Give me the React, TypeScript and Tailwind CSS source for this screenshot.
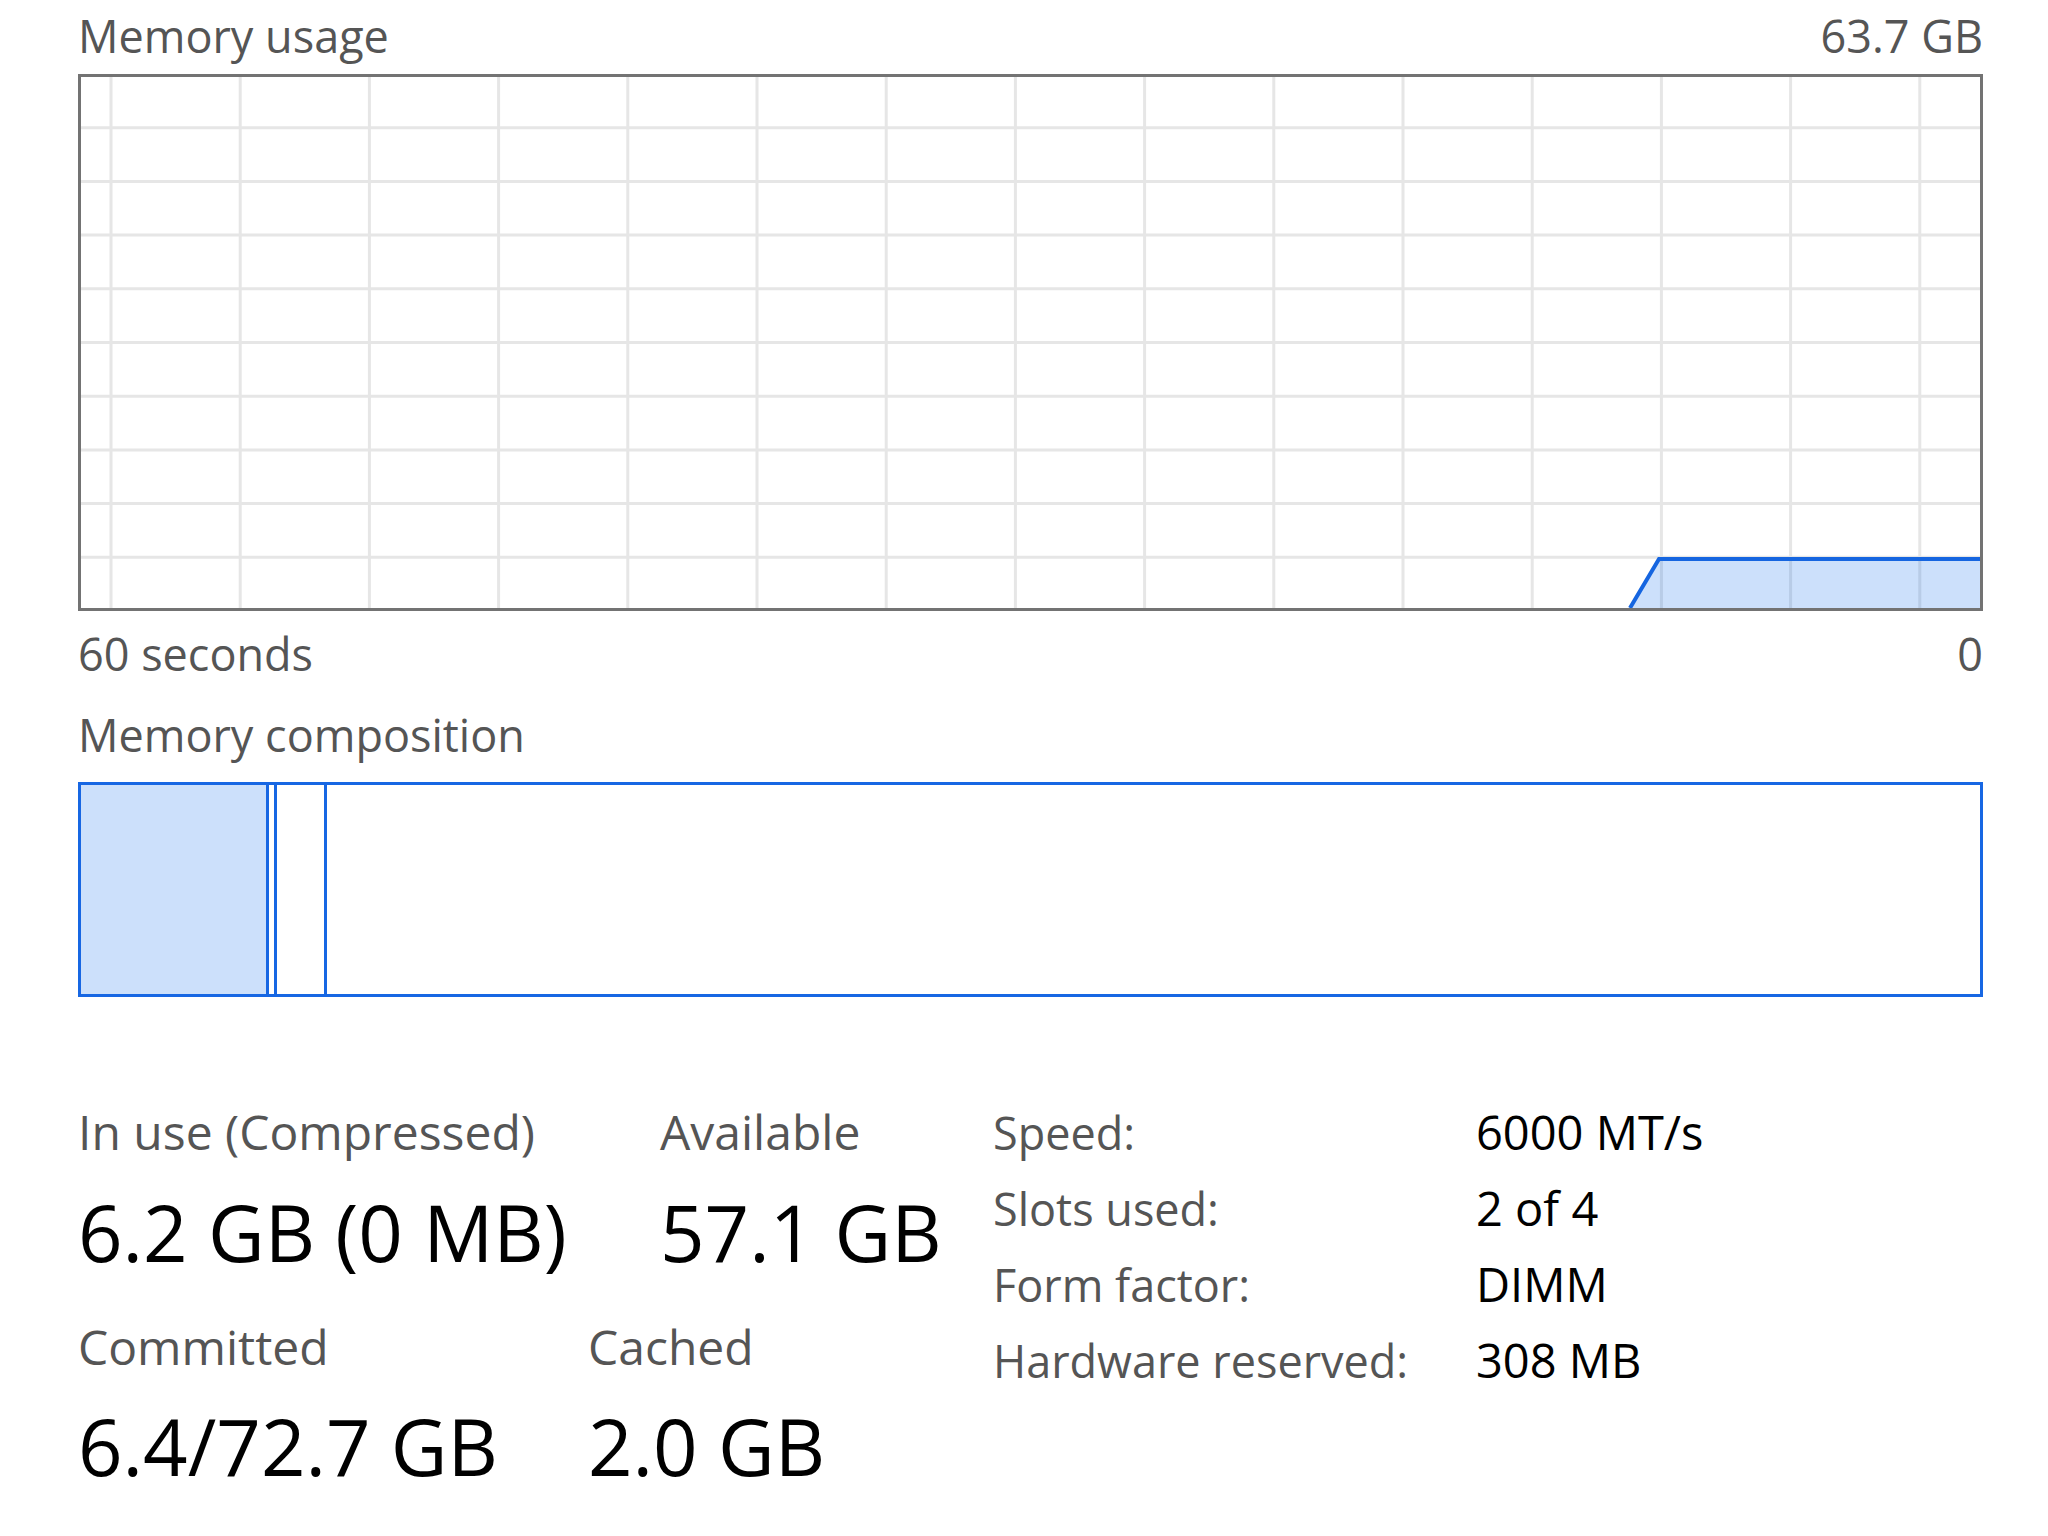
import { Fragment } from "react"

const labelCls = "text-[45px] leading-none text-[#555555] whitespace-nowrap"
const statLabelCls = "text-[48px] leading-none text-[#555555] whitespace-nowrap"
const bigCls = "text-[78px] leading-none text-black whitespace-nowrap"

// chart inner size (outer box is 1905 x 537 with a 3px border)
const W = 1899
const H = 531
const vLines = Array.from({ length: 15 }, (_, k) => 30 + k * 129.2)
const hLines = Array.from({ length: 9 }, (_, i) => (i + 1) * 53.7 - 3)

const specs = [
  ["Speed:", "6000 MT/s"],
  ["Slots used:", "2 of 4"],
  ["Form factor:", "DIMM"],
  ["Hardware reserved:", "308 MB"],
]

function UsageChart() {
  return (
    <div className="w-full h-[537px] border-[3px] border-[#737373] bg-white">
      <svg width={W} height={H} viewBox={`0 0 ${W} ${H}`} className="block">
        {vLines.map((x) => (
          <line key={"v" + x} x1={x} y1={0} x2={x} y2={H} stroke="#e6e6e6" strokeWidth={3} />
        ))}
        {hLines.map((y) => (
          <line key={"h" + y} x1={0} y1={y} x2={W} y2={y} stroke="#e6e6e6" strokeWidth={3} />
        ))}
        <polygon points={`1549,${H} 1578,482 ${W},482 ${W},${H}`} fill="rgba(0,100,235,0.2)" />
        <polyline points={`1549,${H} 1578,482 ${W},482`} fill="none" stroke="#1565e0" strokeWidth={4} />
      </svg>
    </div>
  )
}

function CompositionBar() {
  return (
    <div className="mt-[9px] flex h-[215px] w-full border-[3px] border-[#1767e3] bg-white">
      <div className="w-[188px] bg-[#cce0fb] border-r-[3px] border-[#1767e3]" />
      <div className="w-[8px] border-r-[3px] border-[#1767e3]" />
      <div className="w-[50px] border-r-[3px] border-[#1767e3]" />
      <div className="flex-1" />
    </div>
  )
}

export default function App() {
  return (
    <div className="w-[2048px] h-[1536px] bg-white pl-[78px] pr-[65px] font-['Open_Sans',sans-serif] overflow-hidden">
      <div className="flex h-[70px] items-center justify-between">
        <span className={labelCls}>Memory usage</span>
        <span className={labelCls}>63.7 GB</span>
      </div>
      <div className="mt-[4px]">
        <UsageChart />
      </div>
      <div className="flex h-[84px] items-center justify-between">
        <span className={labelCls}>60 seconds</span>
        <span className={labelCls}>0</span>
      </div>
      <div className="flex h-[78px] items-center">
        <span className={labelCls}>Memory composition</span>
      </div>
      <CompositionBar />

      {/* stats */}
      <div className="mt-[97px] flex">
        <div className="w-[915px] flex flex-col">
          <div className="flex h-[76px] items-center">
            <span className={`${statLabelCls} w-[582px]`}>In use (Compressed)</span>
            <span className={statLabelCls}>Available</span>
          </div>
          <div className="flex h-[124px] items-center">
            <span className={`${bigCls} w-[582px]`}>6.2 GB (0 MB)</span>
            <span className={bigCls}>57.1 GB</span>
          </div>
          <div className="flex h-[106px] items-center">
            <span className={`${statLabelCls} w-[510px]`}>Committed</span>
            <span className={statLabelCls}>Cached</span>
          </div>
          <div className="flex h-[92px] items-center">
            <span className={`${bigCls} w-[510px]`}>6.4/72.7 GB</span>
            <span className={bigCls}>2.0 GB</span>
          </div>
        </div>
        <div className="grid grid-cols-[483px_auto] auto-rows-[76px] items-center">
          {specs.map(([k, v]) => (
            <Fragment key={k}>
              <span className={labelCls}>{k}</span>
              <span className="text-[47px] leading-none text-black whitespace-nowrap">{v}</span>
            </Fragment>
          ))}
        </div>
      </div>
    </div>
  )
}
